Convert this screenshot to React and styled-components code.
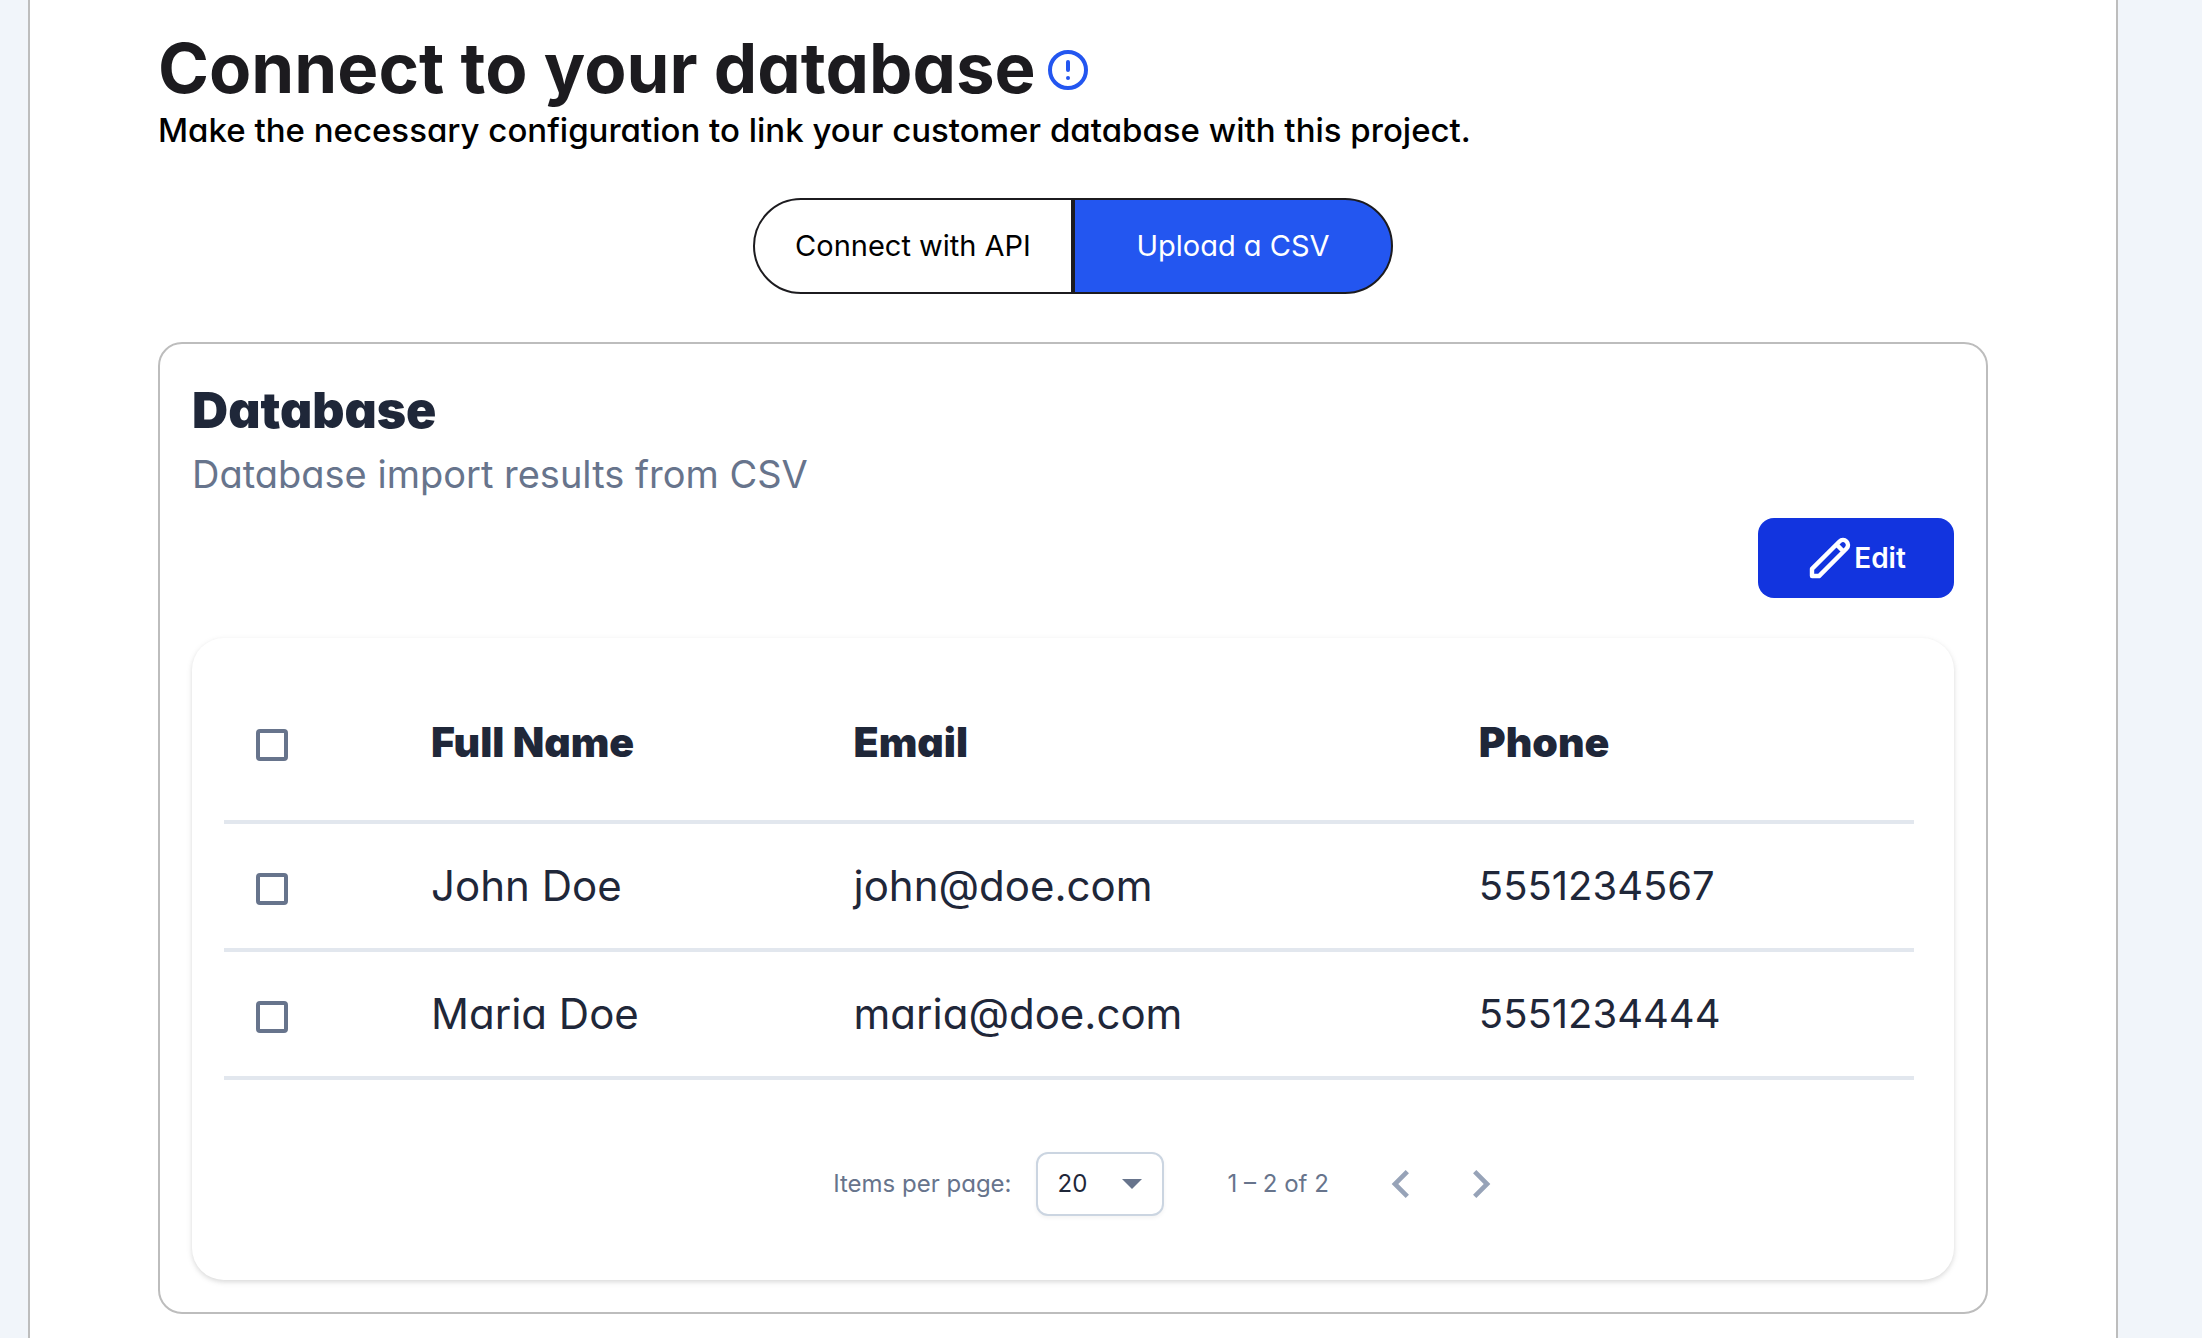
import React, { useState } from 'react';
import styled, { createGlobalStyle } from 'styled-components';

const GlobalStyle = createGlobalStyle`
  *, *::before, *::after {
    box-sizing: border-box;
  }
  body {
    margin: 0;
    background: #f1f5fa;
    font-family: Inter, 'Open Sans', sans-serif;
    font-feature-settings: 'cv11';
    color: #1f2739;
  }
  button, select, input {
    font: inherit;
    font-feature-settings: inherit;
    margin: 0;
  }
`;

const Panel = styled.main`
  min-height: 100vh;
  margin: 0 84px 0 28px;
  padding: 28px 128px 24px;
  background: #fff;
  border: solid #bdbdbd;
  border-width: 0 2px;
`;

const TitleRow = styled.header`
  display: flex;
  align-items: center;
  gap: 8px;
`;

const Title = styled.h1`
  margin: 0;
  font-size: 69px;
  font-weight: 700;
  line-height: 80px;
  color: #1c1b1f;
`;

const InfoButton = styled.button`
  display: flex;
  padding: 4px 0 0;
  border: 0;
  background: none;
  color: #2356f0;
`;

const Intro = styled.p`
  margin: 0;
  font-size: 33px;
  font-weight: 500;
  line-height: 44px;
  color: #000;
`;

const ToggleGroup = styled.div`
  display: flex;
  justify-content: center;
  margin: 46px 0 48px;
`;

const Toggle = styled.button`
  width: 320px;
  height: 96px;
  padding: 0 0 2px;
  border: 2px solid #1c1b1f;
  background: ${(p) => (p.$active ? '#2356f0' : '#fff')};
  color: ${(p) => (p.$active ? '#fff' : '#000')};
  font-size: 29px;

  &:first-child {
    border-radius: 48px 0 0 48px;
  }
  &:last-child {
    border-radius: 0 48px 48px 0;
  }
`;

const Card = styled.section`
  display: flex;
  flex-direction: column;
  padding: 32px;
  border: 2px solid #bdbdbd;
  border-radius: 24px;
`;

const CardTitle = styled.h2`
  margin: 0;
  font-size: 50px;
  font-weight: 900;
  line-height: 68px;
`;

const CardText = styled.p`
  margin: 0 0 14px;
  font-size: 38px;
  line-height: 60px;
  color: #67748c;
`;

const EditButton = styled.button`
  display: flex;
  align-items: center;
  justify-content: center;
  align-self: flex-end;
  width: 196px;
  height: 80px;
  margin-bottom: 40px;
  padding: 0;
  border: 0;
  border-radius: 16px;
  background: #1234df;
  color: #fff;
  font-size: 28px;
  font-weight: 600;
`;

const Sheet = styled.div`
  padding: 26px 40px 64px 32px;
  border-radius: 32px;
  background: #fff;
  box-shadow: 0 2px 6px rgba(0, 0, 0, 0.1), 0 2px 4px rgba(0, 0, 0, 0.06);
`;

const Table = styled.table`
  width: 100%;
  table-layout: fixed;
  border-collapse: separate;
  border-spacing: 0;
`;

const Col = styled.col`
  width: ${(p) => p.$width};
`;

const HeadCell = styled.th`
  height: 160px;
  padding: 0;
  border-bottom: 4px solid #e2e7ee;
  font-size: 41px;
  font-weight: 900;
  line-height: 48px;
  text-align: left;
`;

const Cell = styled.td`
  height: 128px;
  padding: 0;
  border-bottom: 4px solid #e2e7ee;
  font-size: ${(p) => (p.$numeric ? 40 : 42)}px;
  line-height: 48px;
`;

const Checkbox = styled.input`
  appearance: none;
  display: block;
  width: 32px;
  height: 32px;
  margin: 6px 0 0 32px;
  border: 4px solid #67748c;
  border-radius: 4px;

  &:checked {
    background: #1234df;
    border-color: #1234df;
  }
`;

const Paginator = styled.nav`
  display: flex;
  align-items: center;
  justify-content: center;
  padding: 72px 0 0 216px;
  font-size: 24px;
  line-height: 32px;
  color: #67748c;
`;

const SelectBox = styled.div`
  position: relative;
  margin: 0 64px 0 24px;
`;

const Select = styled.select`
  appearance: none;
  display: block;
  width: 128px;
  height: 64px;
  padding: 0 20px;
  border: 2px solid #cbd5e1;
  border-radius: 12px;
  background: #fff;
  color: #1f2739;
  box-shadow: 0 2px 4px rgba(0, 0, 0, 0.05);
`;

const Arrow = styled.svg`
  position: absolute;
  top: 27px;
  right: 22px;
  pointer-events: none;
`;

const Range = styled.span`
  margin-right: 32px;
`;

const PageButton = styled.button`
  display: flex;
  align-items: center;
  justify-content: center;
  width: 80px;
  height: 64px;
  padding: 0;
  border: 0;
  background: none;
  color: #97a3b8;
`;

const InfoIcon = () => (
  <svg width="48" height="48" viewBox="0 0 24 24" fill="none" stroke="currentColor" strokeWidth="2" strokeLinecap="round" aria-hidden="true">
    <circle cx="12" cy="12" r="9" />
    <path d="M12 8v4m0 4h.01" />
  </svg>
);

const PencilIcon = () => (
  <svg width="48" height="48" viewBox="0 0 24 24" fill="none" stroke="currentColor" strokeWidth="2.2" strokeLinecap="round" strokeLinejoin="round" aria-hidden="true">
    <path d="M15.232 5.232l3.536 3.536m-2.036-5.036a2.5 2.5 0 113.536 3.536L6.5 21.036H3v-3.572L16.732 3.732z" />
  </svg>
);

const ChevronIcon = ({ path }) => (
  <svg width="56" height="56" viewBox="0 0 24 24" fill="currentColor" aria-hidden="true">
    <path d={path} />
  </svg>
);

const rows = [
  { name: 'John Doe', email: 'john@doe.com', phone: '5551234567' },
  { name: 'Maria Doe', email: 'maria@doe.com', phone: '5551234444' },
];

export default function App() {
  const [source, setSource] = useState('csv');

  return (
    <>
      <GlobalStyle />
      <Panel>
        <TitleRow>
          <Title>Connect to your database</Title>
          <InfoButton type="button" aria-label="More information">
            <InfoIcon />
          </InfoButton>
        </TitleRow>
        <Intro>Make the necessary configuration to link your customer database with this project.</Intro>

        <ToggleGroup role="group" aria-label="Data source">
          <Toggle type="button" $active={source === 'api'} aria-pressed={source === 'api'} onClick={() => setSource('api')}>
            Connect with API
          </Toggle>
          <Toggle type="button" $active={source === 'csv'} aria-pressed={source === 'csv'} onClick={() => setSource('csv')}>
            Upload a CSV
          </Toggle>
        </ToggleGroup>

        <Card>
          <CardTitle>Database</CardTitle>
          <CardText>Database import results from CSV</CardText>
          <EditButton type="button">
            <PencilIcon />
            Edit
          </EditButton>

          <Sheet>
            <Table>
              <colgroup>
                <Col $width="12.25%" />
                <Col $width="25%" />
                <Col $width="37%" />
                <Col />
              </colgroup>
              <thead>
                <tr>
                  <HeadCell>
                    <Checkbox type="checkbox" aria-label="Select all rows" />
                  </HeadCell>
                  <HeadCell scope="col">Full Name</HeadCell>
                  <HeadCell scope="col">Email</HeadCell>
                  <HeadCell scope="col">Phone</HeadCell>
                </tr>
              </thead>
              <tbody>
                {rows.map((row) => (
                  <tr key={row.email}>
                    <Cell>
                      <Checkbox type="checkbox" aria-label={`Select ${row.name}`} />
                    </Cell>
                    <Cell>{row.name}</Cell>
                    <Cell>{row.email}</Cell>
                    <Cell $numeric>{row.phone}</Cell>
                  </tr>
                ))}
              </tbody>
            </Table>

            <Paginator aria-label="Pagination">
              <label htmlFor="page-size">Items per page:</label>
              <SelectBox>
                <Select id="page-size" defaultValue="20">
                  <option>10</option>
                  <option>20</option>
                  <option>50</option>
                </Select>
                <Arrow width="20" height="10" viewBox="0 0 20 10" fill="#67748c" aria-hidden="true">
                  <path d="M0 0h20L10 10z" />
                </Arrow>
              </SelectBox>
              <Range>1 – 2 of 2</Range>
              <PageButton type="button" aria-label="Previous page">
                <ChevronIcon path="M15.41 7.41 14 6l-6 6 6 6 1.41-1.41L10.83 12z" />
              </PageButton>
              <PageButton type="button" aria-label="Next page">
                <ChevronIcon path="M10 6 8.59 7.41 13.17 12l-4.58 4.59L10 18l6-6z" />
              </PageButton>
            </Paginator>
          </Sheet>
        </Card>
      </Panel>
    </>
  );
}
